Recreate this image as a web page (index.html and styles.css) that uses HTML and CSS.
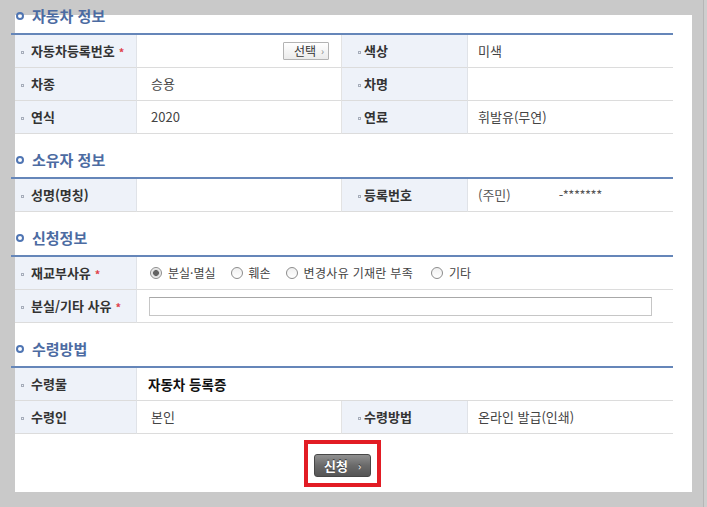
FILE: index.html
```html
<!DOCTYPE html>
<html lang="ko">
<head>
<meta charset="utf-8">
<title>자동차 등록증 재교부 신청</title>
<link rel="stylesheet" href="styles.css">
</head>
<body>
<div class="panel">
  <section class="sec sec-first">
    <h2 class="sec-title"><span class="ring"></span>자동차 정보</h2>
    <div class="rule"></div>
    <div class="grid">
      <div class="lab l1"><span class="bul"></span>자동차등록번호<span class="req">*</span></div>
      <div class="val v1 v-btn"><button class="btn-sel" type="button">선택<span class="chev">›</span></button></div>
      <div class="lab l2"><span class="bul"></span>색상</div>
      <div class="val v2">미색</div>

      <div class="lab l1"><span class="bul"></span>차종</div>
      <div class="val v1">승용</div>
      <div class="lab l2"><span class="bul"></span>차명</div>
      <div class="val v2"></div>

      <div class="lab l1"><span class="bul"></span>연식</div>
      <div class="val v1">2020</div>
      <div class="lab l2"><span class="bul"></span>연료</div>
      <div class="val v2">휘발유(무연)</div>
    </div>
  </section>

  <section class="sec">
    <h2 class="sec-title"><span class="ring"></span>소유자 정보</h2>
    <div class="rule"></div>
    <div class="grid">
      <div class="lab l1"><span class="bul"></span>성명(명칭)</div>
      <div class="val v1"></div>
      <div class="lab l2"><span class="bul"></span>등록번호</div>
      <div class="val v2 muted"><span class="jumin">(주민)</span><span class="masked">-*******</span></div>
    </div>
  </section>

  <section class="sec">
    <h2 class="sec-title"><span class="ring"></span>신청정보</h2>
    <div class="rule"></div>
    <div class="grid">
      <div class="lab l1"><span class="bul"></span>재교부사유<span class="req">*</span></div>
      <div class="val span3 radios">
        <label class="opt"><input type="radio" name="reason" checked>분실·멸실</label>
        <label class="opt"><input type="radio" name="reason">훼손</label>
        <label class="opt opt-wide"><input type="radio" name="reason">변경사유 기재란 부족</label>
        <label class="opt"><input type="radio" name="reason">기타</label>
      </div>

      <div class="lab l1"><span class="bul"></span>분실/기타 사유<span class="req">*</span></div>
      <div class="val span3 inp-cell"><input class="txt" type="text"></div>
    </div>
  </section>

  <section class="sec">
    <h2 class="sec-title"><span class="ring"></span>수령방법</h2>
    <div class="rule"></div>
    <div class="grid">
      <div class="lab l1"><span class="bul"></span>수령물</div>
      <div class="val span3 v1 strong-cell"><strong>자동차 등록증</strong></div>

      <div class="lab l1"><span class="bul"></span>수령인</div>
      <div class="val v1">본인</div>
      <div class="lab l2"><span class="bul"></span>수령방법</div>
      <div class="val v2">온라인 발급(인쇄)</div>
    </div>
  </section>

  <div class="btn-wrap">
    <div class="red-frame">
      <button class="btn-apply" type="button">신청<span class="chev2">›</span></button>
    </div>
  </div>
</div>
</body>
</html>
```

FILE: styles.css
```css
html, body {
  margin: 0;
  padding: 0;
}

body {
  width: 707px;
  height: 507px;
  overflow: hidden;
  background: linear-gradient(to right, #c9c9c9 0, #c9c9c9 703px, #b6b6b6 703px, #b6b6b6 704px, #cecece 704px);
  font-family: "Noto Sans CJK KR", "Noto Sans", sans-serif;
  color: #333;
}

.panel {
  display: flow-root;
  margin: 15px 0 0 15px;
  width: 677px;
  height: 477px;
  background: #fff;
  box-sizing: border-box;
}

.sec {
  width: 658px;
}

.sec-title {
  display: flex;
  align-items: center;
  height: 20px;
  margin: 16px 0 7px;
  padding-left: 1px;
  font-size: 15px;
  font-weight: 700;
  line-height: 20px;
  color: #4c6ba2;
  letter-spacing: 0;
}

.sec-first .sec-title {
  margin-top: -9px;
}

.ring {
  width: 8px;
  height: 8px;
  box-sizing: border-box;
  border: 2.5px solid #4f75b3;
  border-radius: 50%;
  margin-right: 8px;
  margin-top: -1px;
  flex: none;
}

.rule {
  height: 2px;
  width: 662px;
  margin-left: -4px;
  background: #6586b9;
}

.grid {
  display: grid;
  grid-template-columns: 122px 205px 126px 205px;
  width: 658px;
}

.lab,
.val {
  height: 33px;
  box-sizing: border-box;
  border-bottom: 1px solid #dcdcdc;
  display: flex;
  align-items: center;
  font-size: 13px;
  line-height: 16px;
}

.lab {
  background: #eef2f9;
  border-right: 1px solid #e0e3e8;
  font-size: 13px;
  font-weight: 700;
  color: #333;
}

.l1 {
  padding-left: 6px;
}

.l2 {
  padding-left: 16px;
}

.bul {
  width: 3px;
  height: 3px;
  box-sizing: border-box;
  border: 1px solid #a6adba;
  margin-right: 7px;
  margin-top: 2px;
  flex: none;
}

.l2 .bul {
  margin-right: 3px;
}

.req {
  color: #e0424c;
  font-size: 11px;
  font-weight: 700;
  margin-left: 4px;
  margin-top: 2px;
}

.val {
  color: #444;
}

.v1 {
  padding-left: 14px;
  border-right: 1px solid #e3e3e3;
}

.v2 {
  padding-left: 10px;
}

.span3 {
  grid-column: span 3;
  border-right: 0;
}

.v-btn {
  justify-content: flex-end;
  padding-right: 12px;
}

.btn-sel {
  width: 46px;
  height: 18px;
  box-sizing: border-box;
  border: 1px solid #b3b3b3;
  border-radius: 1px;
  background: linear-gradient(#ffffff, #ebebeb);
  font-family: inherit;
  font-size: 12px;
  line-height: 14px;
  color: #333;
  padding: 0 0 0 10px;
  display: flex;
  align-items: center;
}

.chev {
  color: #8d8d8d;
  font-size: 10px;
  margin-left: 5px;
}

.muted .jumin {
  color: #555;
}

.masked {
  margin-left: 48px;
  color: #555;
  letter-spacing: -0.5px;
}

.radios {
  padding-left: 13px;
  font-size: 12px;
}

.opt {
  display: flex;
  align-items: center;
  margin-right: 15px;
  color: #444;
  white-space: nowrap;
}

.opt-wide {
  letter-spacing: 0.3px;
  margin-right: 18px;
}

.opt input {
  appearance: none;
  -webkit-appearance: none;
  width: 12px;
  height: 12px;
  margin: 0 6px 0 0;
  box-sizing: border-box;
  border: 1px solid #8c8c8c;
  border-radius: 50%;
  background: linear-gradient(#f0f0f0, #ffffff);
}

.opt input:checked {
  background: radial-gradient(circle, #646464 0, #646464 2.6px, #d9d9d9 3.2px, #f4f4f4 5px);
}

.inp-cell {
  padding-left: 12px;
}

.txt {
  width: 503px;
  height: 19px;
  box-sizing: border-box;
  border: 1px solid #c6c6c6;
  border-top-color: #a8a8a8;
  padding: 0 4px;
  margin: 0;
  font-family: inherit;
  font-size: 12px;
}

.strong-cell {
  padding-left: 11px;
}

.strong-cell strong {
  font-size: 13.5px;
  font-weight: 700;
  color: #111;
}

.btn-wrap {
  width: 658px;
  display: flex;
  justify-content: center;
  margin-top: 6px;
  padding-right: 3px;
  box-sizing: border-box;
}

.red-frame {
  width: 77px;
  height: 47px;
  box-sizing: border-box;
  border: 4px solid #e21c24;
  padding: 10px 6px 6px;
}

.btn-apply {
  width: 57px;
  height: 23px;
  box-sizing: border-box;
  border: 1px solid #474747;
  border-radius: 3px;
  background: linear-gradient(#909090, #6a6a6a 50%, #555555);
  color: #fff;
  font-family: inherit;
  font-size: 13px;
  font-weight: 700;
  line-height: 16px;
  padding: 0 0 0 9px;
  display: flex;
  align-items: center;
  text-shadow: 0 -1px 0 #333;
}

.chev2 {
  font-size: 10px;
  color: #e6e6e6;
  margin-left: 10px;
}
```
